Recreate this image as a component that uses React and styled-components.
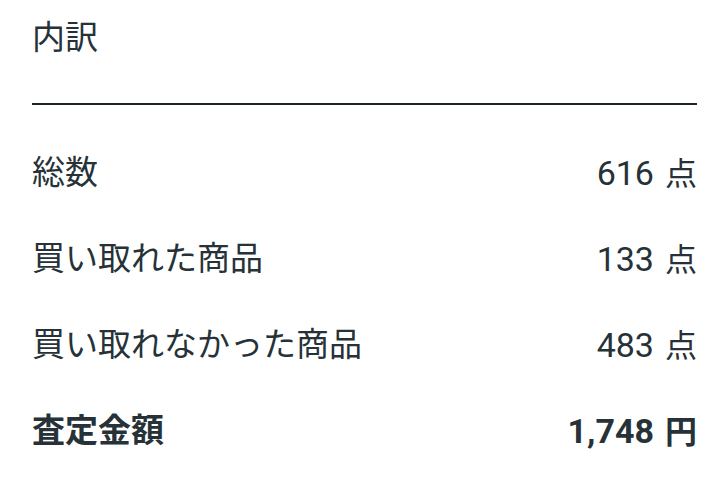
import styled, { createGlobalStyle } from "styled-components";

const GlobalStyle = createGlobalStyle`
  body {
    margin: 0;
    background: #fff;
    font-family: Roboto, "Noto Sans CJK JP", sans-serif;
    color: #263238;
  }
`;

const Panel = styled.section`
  width: 727px;
  height: 490px;
  padding: 0 30px 0 32px;
  box-sizing: border-box;
  background: #fff;
`;

const Title = styled.h2`
  margin: 0;
  padding-top: 18px;
  height: 105px;
  box-sizing: border-box;
  font-size: 33px;
  font-weight: 400;
  line-height: 40px;
  border-bottom: 2px solid #1e2528;
`;

const List = styled.dl`
  margin: 0;
  padding-top: 48px;
  display: flex;
  flex-direction: column;
  gap: 46px;
`;

const Row = styled.div`
  display: flex;
  justify-content: space-between;
  align-items: center;
  height: 40px;
  font-size: 33px;
  line-height: 40px;
  font-weight: ${(p) => (p.$strong ? 700 : 400)};
`;

const Label = styled.dt`
  margin: 0;
`;

const Value = styled.dd`
  margin: 0;
  display: flex;
  align-items: baseline;
`;

const Num = styled.span`
  font-size: 34px;
`;

const Unit = styled.span`
  margin-left: 11px;
  font-size: 32px;
`;

const rows = [
  { label: "総数", num: "616", unit: "点" },
  { label: "買い取れた商品", num: "133", unit: "点" },
  { label: "買い取れなかった商品", num: "483", unit: "点" },
  { label: "査定金額", num: "1,748", unit: "円", strong: true },
];

export default function App() {
  return (
    <>
      <GlobalStyle />
      <Panel>
        <Title>内訳</Title>
        <List>
          {rows.map((r) => (
            <Row key={r.label} $strong={r.strong}>
              <Label>{r.label}</Label>
              <Value>
                <Num>{r.num}</Num>
                <Unit>{r.unit}</Unit>
              </Value>
            </Row>
          ))}
        </List>
      </Panel>
    </>
  );
}
